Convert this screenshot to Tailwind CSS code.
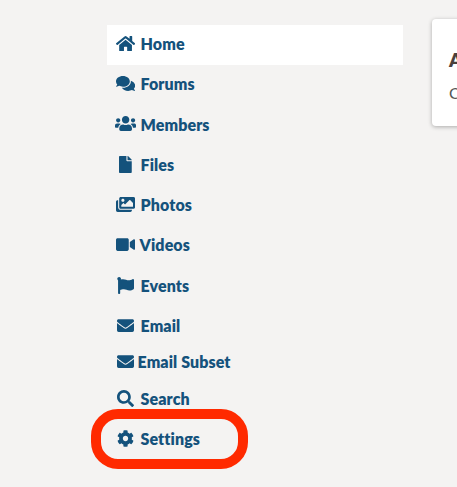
<!DOCTYPE html>
<html><head><meta charset="utf-8"><script src="https://cdn.jsdelivr.net/npm/@tailwindcss/browser@4"></script></head>
<body class="m-0">
<div class="relative w-[457px] h-[487px] overflow-hidden bg-[#f4f3f2] flex font-['Lato',sans-serif]">
  <nav class="ml-[107px] mt-[25px] w-[296px] shrink-0 flex flex-col text-[16px] font-extrabold tracking-[0.1px] text-[#14527c]">
    <a class="h-10 flex items-center bg-white pl-[8.5px]"><span class="w-[20px] mb-[3px] flex justify-center"><svg class="h-[17px] shrink-0 fill-current" viewBox="0 0 576 512"><path d="M280.37 148.26L96 300.11V464a16 16 0 0 0 16 16l112.06-.29a16 16 0 0 0 15.92-16V368a16 16 0 0 1 16-16h64a16 16 0 0 1 16 16v95.64a16 16 0 0 0 16 16.05L464 480a16 16 0 0 0 16-16V300L295.67 148.26a12.19 12.19 0 0 0-15.3 0zM571.6 251.47L488 182.56V44.05a12 12 0 0 0-12-12h-56a12 12 0 0 0-12 12v72.61L318.47 43a48 48 0 0 0-61 0L4.34 251.47a12 12 0 0 0-1.6 16.9l25.5 31A12 12 0 0 0 45.15 301l235.22-193.74a12.19 12.19 0 0 1 15.3 0L530.9 301a12 12 0 0 0 16.9-1.6l25.5-31a12 12 0 0 0-1.7-16.93z"/></svg></span><span class="ml-[5px] mb-[1.5px]">Home</span></a>
    <a class="h-[40.3px] flex items-center pl-[8.5px]"><span class="w-[20px] mb-[3px] flex justify-center"><svg class="h-[17px] shrink-0 fill-current" viewBox="0 0 576 512"><path d="M416 192c0-88.4-93.1-160-208-160S0 103.6 0 192c0 34.3 14.1 65.9 38 92-13.4 30.2-35.5 54.2-35.8 54.5-2.2 2.3-2.8 5.7-1.5 8.7S4.8 352 8 352c36.6 0 66.9-12.3 88.7-25 32.2 15.7 70.3 25 111.3 25 114.9 0 208-71.6 208-160zm122 220c23.9-26 38-57.7 38-92 0-66.9-53.5-124.2-129.3-148.1.9 6.6 1.3 13.3 1.3 20.1 0 105.9-107.7 192-240 192-10.8 0-21.3-.8-31.7-1.9C207.8 439.6 281.8 480 368 480c41 0 79.1-9.2 111.3-25 21.8 12.7 52.1 25 88.7 25 3.2 0 6.1-1.9 7.3-4.8 1.3-2.9.7-6.3-1.5-8.7-.3-.3-22.4-24.2-35.8-54.5z"/></svg></span><span class="ml-[5px] mb-[1.5px]">Forums</span></a>
    <a class="h-[40.3px] flex items-center pl-[8.5px]"><span class="w-[20px] mb-[3px] flex justify-center"><svg class="h-[17px] shrink-0 fill-current" viewBox="0 0 640 512"><path d="M96 224c35.3 0 64-28.7 64-64s-28.7-64-64-64-64 28.7-64 64 28.7 64 64 64zm448 0c35.3 0 64-28.7 64-64s-28.7-64-64-64-64 28.7-64 64 28.7 64 64 64zm32 32h-64c-17.6 0-33.5 7.1-45.1 18.6 40.3 22.1 68.9 62 75.1 109.4h66c17.7 0 32-14.3 32-32v-32c0-35.3-28.7-64-64-64zm-256 0c61.9 0 112-50.1 112-112S381.9 32 320 32 208 82.1 208 144s50.1 112 112 112zm76.8 32h-8.3c-20.8 10-43.9 16-68.5 16s-47.6-6-68.5-16h-8.3C179.6 288 128 339.6 128 403.2V432c0 26.5 21.5 48 48 48h288c26.5 0 48-21.5 48-48v-28.8c0-63.6-51.6-115.2-115.2-115.2zm-223.7-13.4C161.5 263.1 145.6 256 128 256H64c-35.3 0-64 28.7-64 64v32c0 17.7 14.3 32 32 32h65.9c6.3-47.4 34.9-87.3 75.2-109.4z"/></svg></span><span class="ml-[5px] mb-[1.5px]">Members</span></a>
    <a class="h-[40.3px] flex items-center pl-[8.5px]"><span class="w-[20px] mb-[3px] flex justify-center"><svg class="h-[17px] shrink-0 fill-current" viewBox="0 0 384 512"><path d="M224 136V0H24C10.7 0 0 10.7 0 24v464c0 13.3 10.7 24 24 24h336c13.3 0 24-10.7 24-24V160H248c-13.2 0-24-10.8-24-24zm160-14.1v6.1H256V0h6.1c6.4 0 12.5 2.5 17 7l97.9 98c4.5 4.5 7 10.6 7 16.9z"/></svg></span><span class="ml-[5px] mb-[1.5px]">Files</span></a>
    <a class="h-[40.3px] flex items-center pl-[8.5px]"><span class="w-[20px] mb-[3px] flex justify-center"><svg class="h-[17px] shrink-0 fill-current" viewBox="0 0 576 512"><path d="M480 416v16c0 26.51-21.49 48-48 48H48c-26.51 0-48-21.49-48-48V176c0-26.51 21.49-48 48-48h16v208c0 44.112 35.888 80 80 80h336zm96-80V80c0-26.51-21.49-48-48-48H144c-26.51 0-48 21.49-48 48v256c0 26.51 21.49 48 48 48h384c26.51 0 48-21.49 48-48zM256 128c0 26.51-21.49 48-48 48s-48-21.49-48-48 21.49-48 48-48 48 21.49 48 48zm-96 144l55.515-55.515c4.686-4.686 12.284-4.686 16.971 0L272 256l135.515-135.515c4.686-4.686 12.284-4.686 16.971 0L512 208v112H160v-48z"/></svg></span><span class="ml-[5px] mb-[1.5px]">Photos</span></a>
    <a class="h-[40.3px] flex items-center pl-[8.5px]"><span class="w-[20px] mb-[3px] flex justify-center"><svg class="h-[17px] shrink-0 fill-current" viewBox="0 0 576 512"><path d="M336.2 64H47.8C21.4 64 0 85.4 0 111.8v288.4C0 426.6 21.4 448 47.8 448h288.4c26.4 0 47.8-21.4 47.8-47.8V111.8c0-26.4-21.4-47.8-47.8-47.8zm189.4 37.7L416 177.3v157.4l109.6 75.5c21.2 14.6 50.4-.3 50.4-25.8V127.5c0-25.4-29.1-40.4-50.4-25.8z"/></svg></span><span class="ml-[4px] mb-[2.5px]">Videos</span></a>
    <a class="h-[40.3px] flex items-center pl-[8.5px]"><span class="w-[20px] mb-[3px] flex justify-center"><svg class="h-[17px] shrink-0 fill-current" viewBox="0 0 512 512"><path d="M349.565 98.783C295.978 98.783 251.721 64 184.348 64c-24.955 0-47.309 4.384-68.045 12.013a55.947 55.947 0 0 0 3.586-23.562C118.117 24.015 94.806 1.206 66.338.048 34.345-1.254 8 24.296 8 56c0 19.026 9.497 35.825 24 45.945V488c0 13.255 10.745 24 24 24h16c13.255 0 24-10.745 24-24v-94.4c28.311-12.064 63.582-22.122 114.435-22.122 53.588 0 97.844 34.783 165.217 34.783 48.169 0 86.667-16.294 122.505-40.858C506.84 359.452 512 349.571 512 339.045v-243.1c0-23.393-24.269-38.87-45.485-29.016-34.338 15.948-76.454 31.854-116.95 31.854z"/></svg></span><span class="ml-[5px] mb-[1.5px]">Events</span></a>
    <a class="h-[40.3px] flex items-center pl-[8.5px]"><span class="w-[20px] mb-[3px] flex justify-center"><svg class="h-[17px] shrink-0 fill-current" viewBox="0 0 512 512"><path d="M502.3 190.8c3.9-3.1 9.7-.2 9.7 4.7V400c0 26.5-21.5 48-48 48H48c-26.5 0-48-21.5-48-48V195.6c0-5 5.7-7.8 9.7-4.7 22.4 17.4 52.1 39.5 154.1 113.6 21.1 15.4 56.7 47.8 92.2 47.6 35.7.3 72-32.8 92.3-47.6 102-74.1 131.6-96.3 154-113.7zM256 320c23.2.4 56.6-29.2 73.4-41.4 132.7-96.3 142.8-104.7 173.4-128.7 5.8-4.5 9.2-11.5 9.2-18.9v-19c0-26.5-21.5-48-48-48H48C21.5 64 0 85.5 0 112v19c0 7.4 3.4 14.3 9.2 18.9 30.6 23.9 40.7 32.4 173.4 128.7 16.8 12.2 50.2 41.8 73.4 41.4z"/></svg></span><span class="ml-[5px] mb-[1.5px]">Email</span></a>
    <a class="h-[32.4px] flex items-center pl-[10px]"><svg class="h-[17px] mb-[3px] shrink-0 fill-current" viewBox="0 0 512 512"><path d="M502.3 190.8c3.9-3.1 9.7-.2 9.7 4.7V400c0 26.5-21.5 48-48 48H48c-26.5 0-48-21.5-48-48V195.6c0-5 5.7-7.8 9.7-4.7 22.4 17.4 52.1 39.5 154.1 113.6 21.1 15.4 56.7 47.8 92.2 47.6 35.7.3 72-32.8 92.3-47.6 102-74.1 131.6-96.3 154-113.7zM256 320c23.2.4 56.6-29.2 73.4-41.4 132.7-96.3 142.8-104.7 173.4-128.7 5.8-4.5 9.2-11.5 9.2-18.9v-19c0-26.5-21.5-48-48-48H48C21.5 64 0 85.5 0 112v19c0 7.4 3.4 14.3 9.2 18.9 30.6 23.9 40.7 32.4 173.4 128.7 16.8 12.2 50.2 41.8 73.4 41.4z"/></svg><span class="ml-[3.5px] mb-[2.5px]">Email Subset</span></a>
    <a class="h-[40.3px] flex items-center pl-[8.5px]"><span class="w-[20px] mb-[3px] flex justify-center"><svg class="h-[17px] shrink-0 fill-current" viewBox="0 0 512 512"><path d="M505 442.7L405.3 343c-4.5-4.5-10.6-7-17-7H372c27.6-35.3 44-79.7 44-128C416 93.1 322.9 0 208 0S0 93.1 0 208s93.1 208 208 208c48.3 0 92.7-16.4 128-44v16.3c0 6.4 2.5 12.5 7 17l99.7 99.7c9.4 9.4 24.6 9.4 33.9 0l28.3-28.3c9.4-9.4 9.4-24.6.1-34zM208 336c-70.7 0-128-57.2-128-128 0-70.7 57.2-128 128-128 70.7 0 128 57.2 128 128 0 70.7-57.2 128-128 128z"/></svg></span><span class="ml-[5px] mb-[1.5px]">Search</span></a>
    <a class="h-[40.3px] flex items-center pl-[8.5px]"><span class="w-[20px] mb-[3px] flex justify-center"><svg class="h-[17px] shrink-0 fill-current" viewBox="0 0 512 512"><path d="M487.4 315.7l-42.6-24.6c4.3-23.2 4.3-47 0-70.2l42.6-24.6c4.9-2.8 7.1-8.6 5.5-14-11.1-35.6-30-67.8-54.7-94.6-3.8-4.1-10-5.1-14.8-2.3L380.8 110c-17.9-15.4-38.5-27.3-60.8-35.1V25.8c0-5.6-3.9-10.5-9.4-11.7-36.7-8.2-74.3-7.8-109.2 0-5.5 1.2-9.4 6.1-9.4 11.7V75c-22.2 7.9-42.8 19.8-60.8 35.1L88.7 85.5c-4.9-2.8-11-1.9-14.8 2.3-24.7 26.7-43.6 58.9-54.7 94.6-1.7 5.4.6 11.2 5.5 14L67.3 221c-4.3 23.2-4.3 47 0 70.2l-42.6 24.6c-4.9 2.8-7.1 8.6-5.5 14 11.1 35.6 30 67.8 54.7 94.6 3.8 4.1 10 5.1 14.8 2.3l42.6-24.6c17.9 15.4 38.5 27.3 60.8 35.1v49.2c0 5.6 3.9 10.5 9.4 11.7 36.7 8.2 74.3 7.8 109.2 0 5.5-1.2 9.4-6.1 9.4-11.7v-49.2c22.2-7.9 42.8-19.8 60.8-35.1l42.6 24.6c4.9 2.8 11 1.9 14.8-2.3 24.7-26.7 43.6-58.9 54.7-94.6 1.5-5.5-.7-11.3-5.6-14.1zM256 336c-44.1 0-80-35.9-80-80s35.9-80 80-80 80 35.9 80 80-35.9 80-80 80z"/></svg></span><span class="ml-[5px] mb-[1.5px]">Settings</span></a>
  </nav>
  <section class="ml-[29px] mt-[19px] w-[300px] h-[107px] shrink-0 bg-white rounded-[4px] shadow-[0_1px_4px_rgba(0,0,0,0.3)] pl-[17px] pt-[29px]">
    <div class="text-[19px] leading-[24px] font-extrabold text-[#4a403c]">A</div>
    <div class="mt-[11px] text-[16px] leading-[20px] text-[#555555]">C</div>
  </section>
  <div class="absolute left-[91px] top-[409px] w-[157px] h-[60px] border-[10px] border-[#ff2a00] rounded-[27px]"></div>
</div>
</body></html>
